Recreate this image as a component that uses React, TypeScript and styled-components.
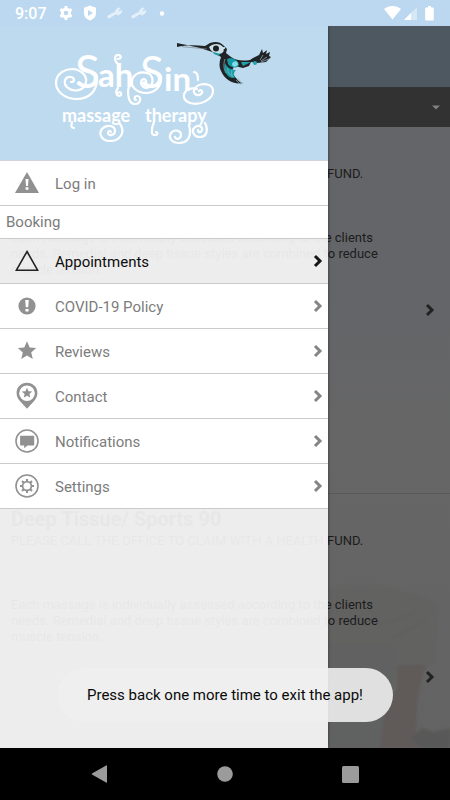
import React from "react";
import styled, { createGlobalStyle, css } from "styled-components";

const GlobalStyle = createGlobalStyle`
  *, *::before, *::after { box-sizing: border-box; }
  body {
    margin: 0;
    background: #000;
    font-family: Roboto, "Liberation Sans", sans-serif;
  }
  button, a { font: inherit; color: inherit; text-decoration: none; }
  button { border: 0; padding: 0; background: none; cursor: pointer; }
  svg { display: block; flex: none; }
`;

const Screen = styled.div`
  display: flex;
  flex-direction: column;
  height: 100vh;
  overflow: hidden;
`;

const StatusBar = styled.header`
  display: flex;
  align-items: center;
  justify-content: space-between;
  flex: none;
  height: 26px;
  padding: 0 16px 0 15px;
  background: #bbd8f0;
  color: #fff;
`;

const StatusGroup = styled.div<{ $gap: number }>`
  display: flex;
  align-items: center;
  gap: ${(p) => p.$gap}px;
`;

const Clock = styled.time`
  font-size: 16px;
  line-height: 24px;
  font-weight: 500;
  padding: 2px 3px 0 0;
`;

const Stage = styled.div`
  position: relative;
  flex: 1;
  min-height: 0;
  overflow: hidden;
`;

const Page = styled.main`
  position: relative;
  height: 100%;
  overflow: hidden;
  display: flex;
  flex-direction: column;
  background: linear-gradient(#646568 0, #646568 280px, #666 420px, #636363 100%);
  color: #1c1c1c;
`;

const TitleBar = styled.div`
  flex: none;
  height: 61px;
  background: #4e5860;
`;

const FilterBar = styled.button`
  display: flex;
  align-items: center;
  justify-content: flex-end;
  flex: none;
  height: 40px;
  padding-right: 10px;
  background: #323232;
`;

const Scenery = styled.svg`
  position: absolute;
  right: 0;
  bottom: 0;
  filter: blur(1px);
`;

const Services = styled.ul`
  position: relative;
  margin: 0;
  padding: 0;
  list-style: none;
`;

const Service = styled.li`
  display: flex;
  align-items: center;
  justify-content: space-between;
  height: 367px;
  padding: 0 15px 0 11px;
  border-bottom: 1px solid #595959;
`;

const ServiceBody = styled.div`
  flex: 1;
  align-self: stretch;
  padding-top: 13px;
  font-size: 13px;
  line-height: 16px;
`;

const ServiceTitle = styled.h2`
  margin: 0;
  font-size: 20px;
  line-height: 24px;
  font-weight: 700;
`;

const ServiceNote = styled.p`
  margin: 2px 0 0;
  line-height: 16px;
  white-space: nowrap;
`;

const ServiceText = styled.p`
  max-width: 376px;
  margin: 48px 0 0;
`;

const Drawer = styled.aside`
  position: absolute;
  top: 0;
  bottom: 0;
  left: 0;
  width: calc(100% - 122px);
  background: rgba(249, 249, 249, 0.92);
  box-shadow: 0 0 3px rgba(0, 0, 0, 0.5);
`;

const Brand = styled.div`
  height: 135px;
  background: #bedaef;
  border-bottom: 1px solid #d2d6da;
`;

const rowBase = css`
  display: flex;
  align-items: center;
  border-bottom: 1px solid #cacaca;
`;

const MenuRow = styled.a<{ $active?: boolean }>`
  ${rowBase}
  height: 45px;
  padding: 0 5px 0 13px;
  font-size: 15px;
  line-height: 20px;
  color: ${(p) => (p.$active ? "#0c0c0c" : "#7c7c7c")};
  background: ${(p) => (p.$active ? "transparent" : "#fff")};
`;

const MenuLabel = styled.span`
  flex: 1;
  padding: 2px 0 0 14px;
`;

const SectionTitle = styled.h3`
  ${rowBase}
  height: 33px;
  margin: 0;
  padding-left: 6px;
  font-size: 15px;
  font-weight: 400;
  color: #7c7c7c;
  background: #fff;
`;

const Toast = styled.div`
  position: absolute;
  left: 57px;
  right: 57px;
  bottom: 26px;
  display: flex;
  align-items: center;
  justify-content: center;
  height: 54px;
  border-radius: 27px;
  background: rgba(238, 238, 238, 0.9);
  color: #0a0a0a;
  font-size: 15px;
  white-space: nowrap;
`;

const NavBar = styled.nav`
  display: grid;
  grid-template-columns: repeat(3, 125px);
  justify-content: center;
  flex: none;
  height: 52px;
  background: #000;
`;

const NavButton = styled.button`
  display: flex;
  align-items: center;
  justify-content: center;
`;

const Chevron = ({ color = "#858585" }: { color?: string }) => (
  <svg width="10" height="14" viewBox="0 0 10 14" fill="none" stroke={color} strokeWidth="3">
    <path d="M2 2 7 7l-5 5" />
  </svg>
);

const GRAY = "#919191";

const icons: Record<string, React.ReactNode> = {
  login: (
    <>
      <path d="M14 3 26 24H2Z" fill={GRAY} />
      <path d="M12.5 10h3l-.5 7h-2zM12.6 18.3h2.8v2.5h-2.8z" fill="#fff" />
    </>
  ),
  appointments: <path d="M14 4.5 24.6 23.2H3.4Z" fill="none" stroke="#222" strokeWidth="1.6" />,
  covid: (
    <>
      <circle cx="14" cy="14" r="8.6" fill={GRAY} />
      <path d="M12.2 8h3.6l-.6 7.3h-2.4zM12.4 17h3.2v2.6h-3.2z" fill="#fff" />
    </>
  ),
  reviews: <path d="m14 4.3 2.7 6.2 6.5.6-5 4.3 1.6 6.5-5.8-3.5-5.8 3.5 1.6-6.5-5-4.3 6.5-.6Z" fill={GRAY} />,
  contact: (
    <>
      <path
        d="M14 .8c5.9 0 10.4 4.3 10.4 10.1 0 3.1-1.2 5.7-3.3 8L14 26.7l-7.1-7.8c-2.1-2.3-3.3-4.9-3.3-8C3.6 5.1 8.1.8 14 .8Z"
        fill={GRAY}
      />
      <circle cx="14" cy="11.2" r="7.8" fill="#fff" />
      <path d="m14 5.8 1.5 3.4 3.7.4-2.8 2.4.8 3.6-3.2-1.9-3.2 1.9.8-3.6-2.8-2.4 3.7-.4Z" fill={GRAY} />
    </>
  ),
  notifications: (
    <>
      <circle cx="14" cy="14" r="11" fill="none" stroke={GRAY} strokeWidth="1.6" />
      <path d="M8 8.7h12.5a.7.7 0 0 1 .7.7v8.5a.7.7 0 0 1-.7.7h-6l-3.3 2.6v-2.6H7.8a.7.7 0 0 1-.7-.7V9.4a.7.7 0 0 1 .9-.7Z" fill={GRAY} />
    </>
  ),
  settings: (
    <>
      <circle cx="14" cy="14" r="11" fill="none" stroke={GRAY} strokeWidth="1.6" />
      <circle cx="14" cy="14" r="4.4" fill="none" stroke={GRAY} strokeWidth="1.7" />
      <path
        d="M14 7v3M14 18v3M7 14h3M18 14h3M9 9l2.2 2.2M16.8 16.8 19 19M9 19l2.2-2.2M16.8 11.2 19 9"
        stroke={GRAY}
        strokeWidth="2"
      />
    </>
  ),
};

const MenuIcon = ({ name }: { name: string }) => (
  <svg width="28" height="28" viewBox="0 0 28 28" aria-hidden="true">
    {icons[name]}
  </svg>
);

const LogoText = styled.text`
  font-family: Lato, sans-serif;
  font-weight: 700;
  fill: #fff;
`;

const LogoInitial = styled.tspan`
  font-weight: 400;
`;

const Logo = () => (
  <svg width="328" height="134" viewBox="0 26 328 134" role="img" aria-label="SahSin massage therapy">
    <LogoText fontSize="33">
      <LogoInitial x="75" y="88" fontSize="46">S</LogoInitial>
      <tspan x="98" y="87">ah</tspan>
      <LogoInitial x="140" y="88" fontSize="44">S</LogoInitial>
      <tspan x="164" y="91">in</tspan>
    </LogoText>
    <LogoText fontSize="18" x="62" y="122">massage</LogoText>
    <LogoText fontSize="18" x="145" y="122">therapy</LogoText>
    <g fill="none" stroke="#fff" strokeWidth="2.2" strokeLinecap="round">
      <path d="M97 79C97 92 88 99 77 99C64 99 56 91 56 83C56 74 64 69 73 69C82 70 87 76 86 82C85 90 75 93 68 88C62 83 65 76 71 77C75 78 75 82 71 82" />
      <path d="M161 77C162 87 154 93 146 93C137 93 131 87 132 81C133 74 140 71 147 73C154 75 154 84 149 87C144 90 139 84 142 80C144 78 147 80 146 83" />
      <path d="M118 64c-4-3-4-10 1-9 3 1 2 4-1 4" />
      <path d="M130 85c-3 4-3 19 5 19 6 0 7-8 2-8-3 0-3 4-1 4" />
      <path d="M118 88c-4 5 0 10 3 7 1-2-1-4-3-2" />
      <path d="M198 80c0-4-1-8-4-8" />
      <path d="M197 89c-12-4-19 10-7 14 11 3 23-4 23-12 0-9-16-9-19-1-1 5 5 7 8 3 1-2-1-4-3-2" />
      <path d="M120 124c6 8 0 17-10 17-8 0-12-7-8-12 4-5 13-4 13 2 0 4-6 6-7 2 0-2 2-3 3-1" />
      <path d="M72 122c-1 4-1 6 2 6" />
      <path d="M154 122c-3 7-3 14 1 13 3 0 3-3 1-3" />
      <path d="M189 125c3 11-1 18-10 18-7 0-11-5-8-10 3-4 10-3 10 2 0 4-5 5-6 2" />
      <path d="M205 123c4 8 1 14-5 14-6 0-9-6-6-9 3-4 9-2 8 2-1 3-4 3-4 0" />
    </g>
    <g strokeLinejoin="round">
      <path d="M177 47c8-2 17-2 28-1l5-3c6-2 10-1 13 2l4 4-1 4 5 4c6 4 12 4 19 3l3-2 6-3 3-6 1 4 4-3-1 4 4-2-1 4 2 1-5 5-9 1-6-1-2 4-6 2-8-2c-4 3-3 8 1 12 3 4 5 5 8 5-11 2-19-3-23-12-2-4-2-9 0-14-8-6-19-9-44-14Z" fill="#202426" />
      <path d="M209 47c4-4 11-4 14 0 2 4 0 7-5 7-5-1-7-3-9-7Z" fill="#cbe0e8" />
      <path d="M182 46.7 207 49" stroke="#7e8789" strokeWidth=".7" />
      <circle cx="216" cy="48.5" r="3" fill="#1c2022" />
      <path d="m213 52 7 2-1 2-5-2Z" fill="#1697a1" />
      <path d="M227 59c5-2 11 1 12 6-3 4-8 3-11-1Z" fill="#149ca6" />
      <ellipse cx="235" cy="64" rx="3" ry="2.5" fill="#81dce8" transform="rotate(-25 235 64)" />
      <path d="m241 62 10 0-8 4Z" fill="#20a0aa" />
      <circle cx="255" cy="63" r="2" fill="#24a4ae" />
      <path d="M225 63c2 5 7 7 11 7-3 3-2 6-1 8-7 1-12-6-10-15Z" fill="#169da8" />
      <path d="M228 68c-1 4 2 7 4 8m0-6c-1 4 0 5 1 7M225 59c-2 6-1 11 1 14" fill="none" stroke="#aac2c7" strokeWidth=".6" />
      <path d="m236 80 5 5m-3-7 4 6m18-24 3-5m-2 6 6-4m-6 5 8-3" stroke="#9fb4bc" strokeWidth=".7" />
      <circle cx="224" cy="48" r="1" fill="#fff" />
    </g>
  </svg>
);

const Wrench = () => (
  <svg width="15" height="13" viewBox="0 0 16 13" aria-hidden="true">
    <path d="m1 9 8-4c0-3 3-5 5-4l-2 2 1 2 3-2c0 4-4 6-7 4l-6 4c-2 1-3-1-2-2Z" fill="#fff" stroke="#fff" opacity=".6" />
  </svg>
);

const services = ["Deep Tissue/ Sports 60", "Deep Tissue/ Sports 90"];

const menu = [
  { id: "appointments", label: "Appointments", active: true },
  { id: "covid", label: "COVID-19 Policy" },
  { id: "reviews", label: "Reviews" },
  { id: "contact", label: "Contact" },
  { id: "notifications", label: "Notifications" },
  { id: "settings", label: "Settings" },
];

export default function App() {
  return (
    <Screen>
      <GlobalStyle />
      <StatusBar>
        <StatusGroup $gap={9}>
          <Clock>9:07</Clock>
          <svg width="14" height="14" viewBox="0 0 14 14" aria-hidden="true">
            <path d="M5.7 0h2.6l.4 2 1.5.8L12 2.2l1.3 2.2L12 5.7v2.6l1.3 1.3-1.3 2.2-1.8-.6-1.5.8-.4 2H5.7l-.4-2-1.5-.8-1.8.6L.7 9.6 2 8.3V5.7L.7 4.4 2 2.2l1.8.6 1.5-.8Z" fill="#fff" />
            <circle cx="7" cy="7" r="2.3" fill="#bbd8f0" />
          </svg>
          <svg width="16" height="16" viewBox="0 0 16 16" aria-hidden="true">
            <path d="m8 .5 6 2.3v5c0 4-2.5 6.5-6 7.7-3.5-1.2-6-3.7-6-7.7v-5Z" fill="#fff" />
            <path d="m6 5 5 3-5 3Z" fill="#bbd8f0" />
          </svg>
          <Wrench />
          <Wrench />
          <svg width="14" height="5" viewBox="0 0 14 5" aria-hidden="true">
            <circle cx="7" cy="2.5" r="2.2" fill="#fff" />
          </svg>
        </StatusGroup>
        <StatusGroup $gap={3}>
          <svg width="17" height="14" viewBox="0 0 17 14" aria-hidden="true">
            <path d="M0 3C5-1 12-1 17 3L8.5 13.5Z" fill="#fff" />
          </svg>
          <svg width="18" height="14" viewBox="0 0 18 14" aria-hidden="true">
            <path d="M13 1v13H0Z" fill="#fff" opacity=".4" />
            <path d="M7 7v7H0Z" fill="#fff" />
          </svg>
          <svg width="9" height="15" viewBox="0 0 9 15" aria-hidden="true">
            <path d="M3 0h3v1.5h2q.8 0 .8.8v11.4q0 .8-.8.8H1q-.8 0-.8-.8V2.3q0-.8.8-.8h2Z" fill="#fff" />
          </svg>
        </StatusGroup>
      </StatusBar>

      <Stage>
        <Page>
          <TitleBar />
          <FilterBar aria-label="Filter services">
            <svg width="8" height="5" viewBox="0 0 8 5"><path d="M0 .5h8l-4 4Z" fill="#808080" /></svg>
          </FilterBar>
          <Scenery width="450" height="200" viewBox="0 0 450 200" opacity=".3" aria-hidden="true">
            <path d="M328 40c38-8 80 0 112 15l-5 60-36 10-71-18Z" fill="#605e5c" />
            <path d="M328 96h68l-7 104h-61Z" fill="#5c5d5f" />
            <path d="M397 118q20-2 30-1-8 16-10 40l-1 27 8 16h-43q2-44 16-59Z" fill="#5a4842" />
            <path d="m410 190 12-10 11 4 17-4v20h-28Z" fill="#44413f" />
            <path d="m336 76 20-7 28 7 29-11m-21 26 35-20" fill="none" stroke="#504d4a" />
          </Scenery>
          <Services>
            {services.map((title) => (
              <Service key={title}>
                <ServiceBody>
                  <ServiceTitle>{title}</ServiceTitle>
                  <ServiceNote>PLEASE CALL THE OFFICE TO CLAIM WITH A HEALTH FUND.</ServiceNote>
                  <ServiceText>
                    Each massage is individually assessed according to the clients needs. Remedial and deep tissue
                    styles are combined to reduce muscle tension.
                  </ServiceText>
                </ServiceBody>
                <Chevron color="#222" />
              </Service>
            ))}
          </Services>
        </Page>

        <Drawer>
          <Brand><Logo /></Brand>
          <MenuRow href="#login">
            <MenuIcon name="login" />
            <MenuLabel>Log in</MenuLabel>
          </MenuRow>
          <SectionTitle>Booking</SectionTitle>
          {menu.map((item) => (
            <MenuRow key={item.id} href={`#${item.id}`} $active={item.active}>
              <MenuIcon name={item.id} />
              <MenuLabel>{item.label}</MenuLabel>
              <Chevron color={item.active ? "#161616" : undefined} />
            </MenuRow>
          ))}
        </Drawer>

        <Toast role="status">Press back one more time to exit the app!</Toast>
      </Stage>

      <NavBar>
        <NavButton aria-label="Back">
          <svg width="18" height="18" viewBox="0 0 18 18"><path d="M16 .5v17q0 .5-.5.3L1 9.5Q.3 9 1 8.5L15.5.2q.5-.2.5.3Z" fill="#9b9b9b" /></svg>
        </NavButton>
        <NavButton aria-label="Home">
          <svg width="16" height="16" viewBox="0 0 16 16"><circle cx="8" cy="8" r="7.8" fill="#9b9b9b" /></svg>
        </NavButton>
        <NavButton aria-label="Recent apps">
          <svg width="17" height="17" viewBox="0 0 17 17"><rect width="17" height="17" rx="1.5" fill="#9b9b9b" /></svg>
        </NavButton>
      </NavBar>
    </Screen>
  );
}
